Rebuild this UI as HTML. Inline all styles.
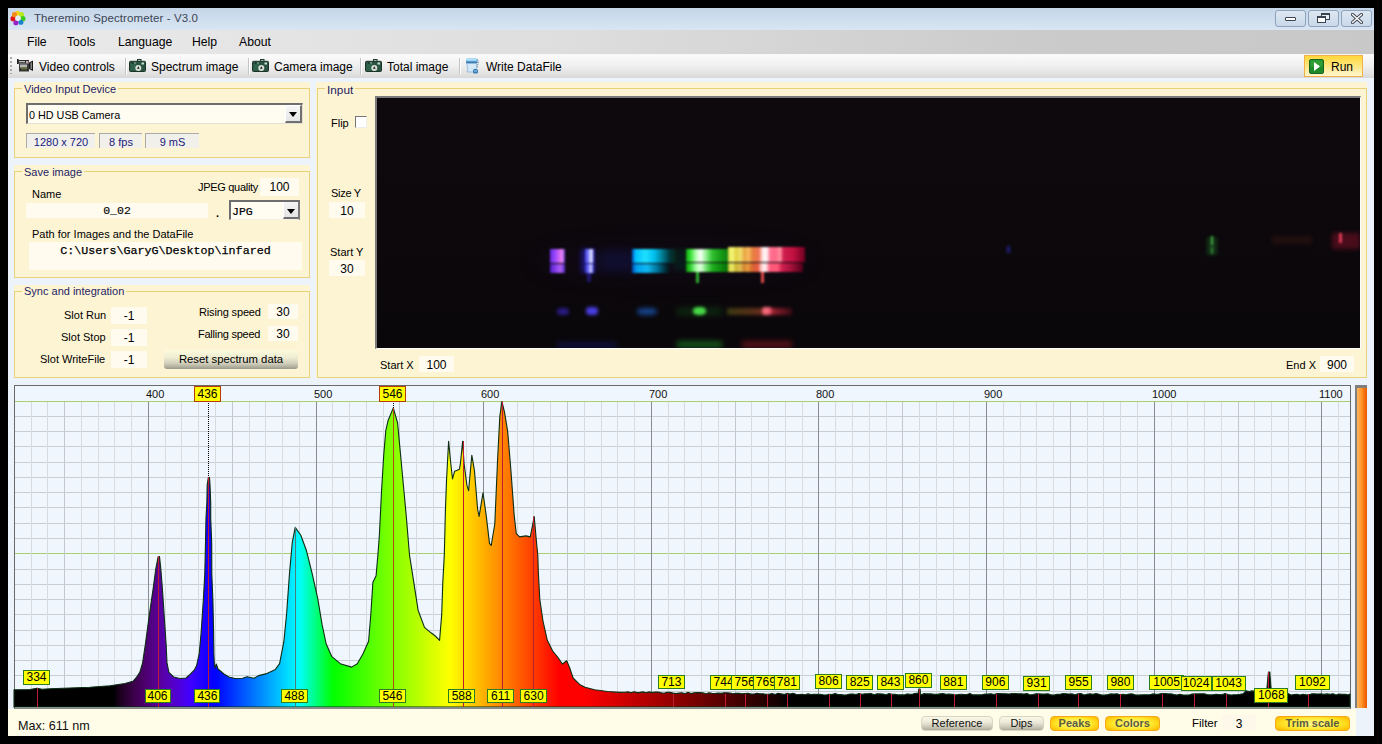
<!DOCTYPE html>
<html><head><meta charset="utf-8">
<style>
*{margin:0;padding:0;box-sizing:border-box}
html,body{width:1382px;height:744px;overflow:hidden;background:#000;font-family:"Liberation Sans",sans-serif;position:relative}
.a{position:absolute}
#win{position:absolute;left:8px;top:8px;width:1366px;height:728px;background:#edf3fa}
#title{position:absolute;left:8px;top:8px;width:1366px;height:22px;background:linear-gradient(#c5d6e9,#d9e5f2)}
.tt{position:absolute;left:34px;top:12px;font-size:11.5px;color:#3a4554;letter-spacing:0.1px;white-space:nowrap}
.wb{position:absolute;top:10px;width:31px;height:17px;border:1px solid #8ea3bd;border-radius:3px;background:linear-gradient(#dde7f2,#c9d8e9)}
#menu{position:absolute;left:8px;top:30px;width:1366px;height:24px;background:linear-gradient(90deg,#eaeaea 0%,#dedede 40%,#cbcbcb 75%,#c8c8c8 100%)}
.mi{position:absolute;top:35px;font-size:12.2px;color:#000;white-space:nowrap}
#tool{position:absolute;left:8px;top:54px;width:1366px;height:24px;background:linear-gradient(#fbfbfb 0%,#f0f0f0 45%,#e2e2e2 80%,#d8d8d8 100%);border-top:1px solid #f7f7f7}
.tx{position:absolute;top:59.5px;font-size:12px;color:#000;white-space:nowrap}
.sep{position:absolute;top:58px;width:1px;height:17px;background:#c4c4c4;box-shadow:1px 0 0 #fff}
.grp{position:absolute;background:#fdf4d4}
.bd{position:absolute;border:1px solid #ead27a}
.gt{position:absolute;font-size:11px;color:#1d1d64;background:#fdf4d4;padding:0 2px;white-space:nowrap}
.lbl{position:absolute;font-size:11px;color:#000;white-space:nowrap}
.inp{position:absolute;background:#fffbef;font-size:12px;color:#000;text-align:center;white-space:nowrap}
.info{position:absolute;background:#f1f0ea;border-top:1px solid #aaa;border-left:1px solid #aaa;font-size:11px;color:#1a1a7a;text-align:center;white-space:nowrap;line-height:14px}
.ax{position:absolute;top:388px;font-size:11px;color:#111;white-space:nowrap}
.pk{position:absolute;height:14.5px;background:#ffff00;border:1px solid #2b7d22;font-size:12px;line-height:13px;color:#000;text-align:center;white-space:nowrap}
.hpk{position:absolute;height:16px;background:#ffff00;border:1.5px solid #b53a0c;font-size:12px;line-height:14px;color:#000;text-align:center}
.btn{position:absolute;height:15px;border-radius:5px;font-size:11px;text-align:center;line-height:13px;white-space:nowrap}
.gb{background:linear-gradient(#faf9e6 0%,#eceada 40%,#cdcab9 75%,#aeab9c 100%);border:1px solid #d8d5c2;color:#111;border-radius:4px}
.yb{background:radial-gradient(ellipse 60% 70% at 50% 50%,#fff690 0%,#ffea30 60%,#ffc000 100%);border:1px solid #f2a818;color:#5c5c40;font-weight:bold;border-radius:4px}
</style></head><body>
<div id="win"></div>
<div id="title"></div>
<svg class="a" style="left:8px;top:8px" width="20" height="20" viewBox="0 0 20 20"><circle cx="9.56" cy="5.22" r="2.55" fill="#f5d31e"/><circle cx="13.54" cy="6.66" r="2.55" fill="#b8e81e"/><circle cx="14.98" cy="10.64" r="2.55" fill="#3ccc1e"/><circle cx="12.87" cy="14.30" r="2.55" fill="#1a86c8"/><circle cx="7.89" cy="14.73" r="2.55" fill="#9a22c8"/><circle cx="5.02" cy="10.64" r="2.55" fill="#e0141c"/><circle cx="6.46" cy="6.66" r="2.55" fill="#f28a1a"/><circle cx="10" cy="10.2" r="2.7" fill="#e4ecf4"/></svg>
<div class="tt">Theremino Spectrometer - V3.0</div>
<div class="wb" style="left:1275px"><div class="a" style="left:9px;top:6px;width:11px;height:4px;border:1px solid #3c4350;background:#fff;border-radius:1px"></div></div>
<div class="wb" style="left:1308px">
  <div class="a" style="left:12px;top:2px;width:9px;height:7px;border:1px solid #3c4350;border-top-width:2px;background:#e8eef5"></div>
  <div class="a" style="left:8px;top:5px;width:9px;height:7px;border:1px solid #3c4350;border-top-width:2px;background:#fff"></div>
</div>
<div class="wb" style="left:1341px">
  <svg class="a" style="left:9px;top:2px" width="12" height="11" viewBox="0 0 12 11"><path d="M1.5,1.5 L10.5,9.5 M10.5,1.5 L1.5,9.5" stroke="#3c4350" stroke-width="3.2" stroke-linecap="round"/><path d="M1.5,1.5 L10.5,9.5 M10.5,1.5 L1.5,9.5" stroke="#fff" stroke-width="1.4" stroke-linecap="round"/></svg>
</div>
<div id="menu"></div>
<div class="mi" style="left:27px">File</div>
<div class="mi" style="left:67px">Tools</div>
<div class="mi" style="left:118px">Language</div>
<div class="mi" style="left:192px">Help</div>
<div class="mi" style="left:239px">About</div>
<div id="tool"></div>
<div class="a" style="left:10px;top:57px;width:2px;height:17px;background:repeating-linear-gradient(#a8a8a8 0 2px,transparent 2px 4px)"></div>
<svg class="a" style="left:17px;top:59px" width="17" height="13" viewBox="0 0 17 13">
  <rect x="0" y="0" width="1.6" height="5" fill="#222"/>
  <rect x="1" y="1" width="11" height="3.5" fill="#2a2a2a"/><rect x="2" y="2" width="6" height="1.3" fill="#bbb"/>
  <rect x="9" y="2" width="2.5" height="2.5" fill="#c8a8b0"/>
  <rect x="2" y="4.5" width="10" height="8" fill="#3a3a3a"/><rect x="3" y="5.5" width="7" height="3" fill="#b8b8b8"/>
  <rect x="4" y="8.5" width="6" height="3.5" fill="#6a6a40"/><rect x="3" y="10.5" width="8" height="1.2" fill="#222"/>
  <path d="M12,3.5 L16,1.5 L16,12 L12,10 Z" fill="#1a1a1a"/><rect x="13.5" y="3.5" width="1.5" height="6.5" fill="#888"/>
</svg>
<div class="tx" style="left:39px">Video controls</div>
<div class="sep" style="left:125px"></div>
<svg class="a" style="left:129px;top:59px" width="17" height="13" viewBox="0 0 17 13">
  <rect x="8" y="0" width="4.5" height="3" fill="#1e3a2c"/><rect x="9" y="1" width="2.5" height="1" fill="#cfd8cf"/>
  <rect x="0.5" y="2.3" width="16" height="10.2" rx="1" fill="#2b5342" stroke="#1c3428" stroke-width="1"/>
  <rect x="1.5" y="5" width="6" height="6.5" fill="#2f6650" opacity="0.8"/>
  <rect x="3" y="3.5" width="1.5" height="1" fill="#0f2018"/><rect x="5" y="3.5" width="2" height="1" fill="#9ab8a8"/>
  <rect x="12.5" y="3.5" width="2.5" height="2" fill="#c8e0d0"/>
  <circle cx="9.3" cy="9" r="3" fill="#d8e0d8"/><path d="M9.3,7.3 L10.6,9.8 L8,9.8 Z" fill="#0a140e"/>
</svg>

<div class="tx" style="left:151px">Spectrum image</div>
<div class="sep" style="left:248px"></div>
<svg class="a" style="left:252px;top:59px" width="17" height="13" viewBox="0 0 17 13">
  <rect x="8" y="0" width="4.5" height="3" fill="#1e3a2c"/><rect x="9" y="1" width="2.5" height="1" fill="#cfd8cf"/>
  <rect x="0.5" y="2.3" width="16" height="10.2" rx="1" fill="#2b5342" stroke="#1c3428" stroke-width="1"/>
  <rect x="1.5" y="5" width="6" height="6.5" fill="#2f6650" opacity="0.8"/>
  <rect x="3" y="3.5" width="1.5" height="1" fill="#0f2018"/><rect x="5" y="3.5" width="2" height="1" fill="#9ab8a8"/>
  <rect x="12.5" y="3.5" width="2.5" height="2" fill="#c8e0d0"/>
  <circle cx="9.3" cy="9" r="3" fill="#d8e0d8"/><path d="M9.3,7.3 L10.6,9.8 L8,9.8 Z" fill="#0a140e"/>
</svg>

<div class="tx" style="left:274px">Camera image</div>
<div class="sep" style="left:360px"></div>
<svg class="a" style="left:365px;top:59px" width="17" height="13" viewBox="0 0 17 13">
  <rect x="8" y="0" width="4.5" height="3" fill="#1e3a2c"/><rect x="9" y="1" width="2.5" height="1" fill="#cfd8cf"/>
  <rect x="0.5" y="2.3" width="16" height="10.2" rx="1" fill="#2b5342" stroke="#1c3428" stroke-width="1"/>
  <rect x="1.5" y="5" width="6" height="6.5" fill="#2f6650" opacity="0.8"/>
  <rect x="3" y="3.5" width="1.5" height="1" fill="#0f2018"/><rect x="5" y="3.5" width="2" height="1" fill="#9ab8a8"/>
  <rect x="12.5" y="3.5" width="2.5" height="2" fill="#c8e0d0"/>
  <circle cx="9.3" cy="9" r="3" fill="#d8e0d8"/><path d="M9.3,7.3 L10.6,9.8 L8,9.8 Z" fill="#0a140e"/>
</svg>

<div class="tx" style="left:387px">Total image</div>
<div class="sep" style="left:459px"></div>
<svg class="a" style="left:465px;top:57px" width="15" height="17" viewBox="0 0 15 17">
  <path d="M2,6 L11,6 Q12.5,9 11,12 L11,15 L2,15 Q3.5,12 2,9 Z" fill="#d4e8f8" stroke="#8ab4d8" stroke-width="0.8"/>
  <rect x="1" y="1.2" width="11.5" height="5" rx="2.2" fill="#7ec0ec"/>
  <rect x="1.5" y="1.6" width="10" height="2" rx="1" fill="#b8e4fa"/>
  <rect x="1" y="4.5" width="11.5" height="1.7" fill="#3a7ab0"/>
  <path d="M12,2 Q14,4 13,7 Q12,9 13,11" stroke="#4a6a88" stroke-width="0.9" fill="none" stroke-dasharray="1,0.8"/>
  <rect x="8" y="12" width="5" height="4.5" rx="1.5" fill="#3a78b0"/>
  <rect x="9" y="13" width="3" height="2" fill="#6aa8d8"/>
</svg>
<div class="tx" style="left:486px">Write DataFile</div>
<div class="a" style="left:1304px;top:55px;width:59px;height:22px;border:1px solid #f0b14a;background:linear-gradient(#ffd83a 0%,#ffe680 50%,#fff6d0 100%)"></div>
<svg class="a" style="left:1309px;top:59px" width="15" height="15" viewBox="0 0 15 15">
  <rect x="0.5" y="0.5" width="14" height="14" rx="1.5" fill="#1f8a2a" stroke="#176620"/>
  <rect x="1.5" y="1.5" width="12" height="6" fill="#3aad40" opacity="0.6"/>
  <path d="M5,3 L11,7.5 L5,12 Z" fill="#fff"/>
</svg>
<div class="tx" style="left:1331px">Run</div>

<!-- Group 1 -->
<div class="grp" style="left:14px;top:82px;width:296px;height:76px"></div>
<div class="bd" style="left:14px;top:88px;width:296px;height:70px"></div>
<div class="gt" style="left:22px;top:82.5px">Video Input Device</div>
<div class="a" style="left:26px;top:103px;width:277px;height:21px;background:#fffcf2;border-top:2px solid #6e6e6e;border-left:2px solid #6e6e6e;border-bottom:1px solid #e4e0d4;border-right:1px solid #e4e0d4"></div>
<div class="a" style="left:285px;top:105px;width:17px;height:18px;background:linear-gradient(#f6f6f6,#e6e6e6);border-right:2px solid #707070;border-bottom:2px solid #707070;border-left:1px solid #fff;border-top:1px solid #fff"></div>
<div class="a" style="left:289px;top:112px;width:0;height:0;border-left:4.5px solid transparent;border-right:4.5px solid transparent;border-top:5px solid #000"></div>
<div class="lbl" style="left:29px;top:109px;font-size:10.8px">0 HD USB Camera</div>
<div class="info" style="left:26px;top:133px;width:69px;height:15px;line-height:16px">1280 x 720</div>
<div class="info" style="left:99px;top:133px;width:43px;height:15px;line-height:16px">8 fps</div>
<div class="info" style="left:145px;top:133px;width:54px;height:15px;line-height:16px">9 mS</div>

<!-- Group 2 -->
<div class="grp" style="left:14px;top:165px;width:296px;height:113px"></div>
<div class="bd" style="left:14px;top:171px;width:296px;height:107px"></div>
<div class="gt" style="left:22px;top:165.5px">Save image</div>
<div class="lbl" style="left:198px;top:181px;letter-spacing:-0.3px">JPEG quality</div>
<div class="inp" style="left:260px;top:178px;width:39px;height:18px;line-height:19px">100</div>
<div class="lbl" style="left:32px;top:188px">Name</div>
<div class="inp" style="left:26px;top:203px;width:182px;height:15px;line-height:15px;font-family:'Liberation Mono',monospace;font-size:11.5px;color:#000;-webkit-text-stroke:0.15px #000">0_02</div>
<div class="lbl" style="left:216px;top:207px;font-weight:bold">.</div>
<div class="a" style="left:229px;top:200px;width:71px;height:20px;background:#fffcf2;border-top:2px solid #6e6e6e;border-left:2px solid #6e6e6e;border-right:2px solid #7a7a7a;border-bottom:1px solid #f4f0e4"></div>
<div class="lbl" style="left:232px;top:205px;font-family:'Liberation Mono',monospace;font-size:11.5px;color:#000;-webkit-text-stroke:0.2px #000">JPG</div>
<div class="a" style="left:283px;top:202px;width:15px;height:17px;background:linear-gradient(#f4f4f4,#e4e4e4);border-bottom:2px solid #707070;border-left:1px solid #fff"></div>
<div class="a" style="left:287px;top:209px;width:0;height:0;border-left:4.5px solid transparent;border-right:4.5px solid transparent;border-top:5px solid #000"></div>
<div class="lbl" style="left:32px;top:228px">Path for Images and the DataFile</div>
<div class="inp" style="left:29px;top:242px;width:273px;height:28px;font-family:'Liberation Mono',monospace;font-size:11.7px;line-height:15px;padding-top:1.5px;color:#000;-webkit-text-stroke:0.25px #000">C:\Users\GaryG\Desktop\infared</div>

<!-- Group 3 -->
<div class="grp" style="left:14px;top:285px;width:296px;height:93px"></div>
<div class="bd" style="left:14px;top:291px;width:296px;height:87px"></div>
<div class="gt" style="left:22px;top:285px">Sync and integration</div>
<div class="lbl" style="left:64px;top:309px">Slot Run</div>
<div class="inp" style="left:111px;top:307px;width:36px;height:17px;line-height:18px">-1</div>
<div class="lbl" style="left:61px;top:331px">Slot Stop</div>
<div class="inp" style="left:111px;top:329px;width:36px;height:17px;line-height:18px">-1</div>
<div class="lbl" style="left:40px;top:353px">Slot WriteFile</div>
<div class="inp" style="left:111px;top:351px;width:36px;height:17px;line-height:18px">-1</div>
<div class="lbl" style="left:199px;top:306px;letter-spacing:-0.15px">Rising speed</div>
<div class="inp" style="left:268px;top:304px;width:30px;height:15px;line-height:16px">30</div>
<div class="lbl" style="left:198px;top:328px;letter-spacing:-0.25px">Falling speed</div>
<div class="inp" style="left:268px;top:326px;width:30px;height:15px;line-height:16px">30</div>
<div class="a" style="left:164px;top:350px;width:134px;height:19px;border-radius:3px;background:linear-gradient(#fcfbdc 0%,#eeedd2 40%,#cfcdb9 72%,#9c9a8b 100%);font-size:11.3px;text-align:center;line-height:18px;color:#000">Reset spectrum data</div>

<!-- Group 4 Input -->
<div class="grp" style="left:316px;top:82px;width:1051px;height:296px"></div>
<div class="bd" style="left:317px;top:88px;width:1050px;height:290px"></div>
<div class="gt" style="left:325px;top:83px;font-size:11.8px">Input</div>
<div class="lbl" style="left:331px;top:117px">Flip</div>
<div class="a" style="left:355px;top:116px;width:12px;height:12px;background:#fff;border-top:1px solid #777;border-left:1px solid #777;border-right:1px solid #eee;border-bottom:1px solid #eee"></div>
<div class="lbl" style="left:331px;top:186.5px;letter-spacing:-0.3px">Size Y</div>
<div class="inp" style="left:329px;top:202px;width:36px;height:16px;line-height:18px">10</div>
<div class="lbl" style="left:330px;top:245.5px">Start Y</div>
<div class="inp" style="left:329px;top:260px;width:36px;height:16px;line-height:18px">30</div>
<div class="lbl" style="left:380px;top:359px">Start X</div>
<div class="inp" style="left:419px;top:356px;width:35px;height:16px;line-height:18px">100</div>
<div class="lbl" style="left:1286px;top:359px">End X</div>
<div class="inp" style="left:1320px;top:356px;width:34px;height:16px;line-height:18px">900</div>

<div class="a" style="left:375px;top:96px;width:986px;height:253px;border-top:2px solid #7a7a7a;border-left:2px solid #7a7a7a;border-right:1px solid #fff;border-bottom:1px solid #fff"></div>
<div class="a" style="left:377px;top:98px;width:983px;height:250px;background:linear-gradient(#0d090c,#0c080c 50%,#0a070a);overflow:hidden">
  <div class="a" style="left:0;top:0;width:983px;height:250px;filter:blur(0.9px)">
    <!-- haze -->
    <div class="a" style="left:160px;top:146px;width:270px;height:34px;border-radius:50%;background:rgba(30,15,50,0.22);filter:blur(10px)"></div>
    <!-- violet -->
    <div class="a" style="left:173px;top:151px;width:15px;height:14px;background:linear-gradient(90deg,#6a2ae0,#9a48ff 35%,#e070f0 70%,#f090f0 80%,#6030d0 100%)"></div>
    <div class="a" style="left:173px;top:166px;width:15px;height:9px;background:linear-gradient(90deg,#5020c0,#8a40f0 40%,#b060f0 70%,#5028c0 100%)"></div>
    <!-- blue line -->
    <div class="a" style="left:204px;top:151px;width:14px;height:24px;background:rgba(40,30,200,0.55);filter:blur(2px)"></div>
    <div class="a" style="left:208px;top:151px;width:9px;height:14px;background:linear-gradient(90deg,#4040e0,#8080ff 40%,#f0f0ff 65%,#d0d0ff 80%,#2020d0 100%)"></div>
    <div class="a" style="left:208px;top:166px;width:9px;height:9px;background:linear-gradient(90deg,#3030c0,#7070ff 40%,#e0e0ff 65%,#2020d0 100%)"></div>
    <div class="a" style="left:210px;top:175px;width:4px;height:9px;background:rgba(50,40,200,0.5)"></div>
    <!-- faint blue -->
    <div class="a" style="left:222px;top:152px;width:36px;height:22px;background:rgba(20,25,110,0.3);filter:blur(4px)"></div>
    <!-- cyan -->
    <div class="a" style="left:255px;top:151px;width:44px;height:14px;background:linear-gradient(90deg,#0050c0,#00c0ff 8%,#20e0ff 30%,#00c0f0 50%,#008098 68%,#003a40 85%,#0d1a14 100%)"></div>
    <div class="a" style="left:255px;top:166px;width:38px;height:9px;background:linear-gradient(90deg,#0048b0,#00a0f0 12%,#10b8f0 40%,#0078a0 65%,#002830 90%,#0d1218 100%)"></div>
    <div class="a" style="left:296px;top:151px;width:14px;height:22px;background:rgba(0,60,40,0.35);filter:blur(2px)"></div>
    <!-- green -->
    <div class="a" style="left:309px;top:151px;width:42px;height:13px;background:linear-gradient(90deg,#10a010,#30e030 10%,#c0ffc0 25%,#f8fff8 35%,#90f090 48%,#30c030 62%,#18a018 80%,#108010 100%)"></div>
    <div class="a" style="left:309px;top:165px;width:42px;height:9px;background:linear-gradient(90deg,#0c900c,#28d028 10%,#b0ffb0 25%,#e0ffe0 35%,#70e070 48%,#20b020 62%,#109010 80%,#087008 100%)"></div>
    <div class="a" style="left:319px;top:174px;width:3px;height:11px;background:#30b030"></div>
    <!-- yellow/red -->
    <div class="a" style="left:351px;top:149px;width:77px;height:15px;background:linear-gradient(90deg,#d8d840,#f8f880 5%,#e0d040 11%,#f0e070 16%,#e8a040 22%,#f8c060 26%,#e88040 32%,#f07050 40%,#ffe8e8 45%,#fff8f8 50%,#ff7090 55%,#ff6888 62%,#ff90a0 68%,#d02050 72%,#c01040 85%,#700020 100%)"></div>
    <div class="a" style="left:351px;top:165px;width:75px;height:9px;background:linear-gradient(90deg,#c0c030,#f0f070 5%,#c8b030 11%,#e0c050 16%,#d08030 22%,#e8a040 26%,#d86830 32%,#e85840 40%,#ffd8d8 45%,#fff0f0 50%,#ff5878 56%,#ff5878 66%,#d02050 72%,#a01038 85%,#500018 100%)"></div>
    <div class="a" style="left:384px;top:174px;width:3px;height:11px;background:#e04848"></div>
    <!-- lower faint band -->
    <div class="a" style="left:180px;top:210px;width:12px;height:7px;border-radius:40%;background:rgba(60,40,210,0.6);filter:blur(1.8px)"></div>
    <div class="a" style="left:209px;top:209px;width:12px;height:8px;border-radius:40%;background:rgba(80,70,255,0.9);filter:blur(1.5px)"></div>
    <div class="a" style="left:260px;top:210px;width:20px;height:7px;border-radius:40%;background:rgba(30,110,230,0.6);filter:blur(2px)"></div>
    <div class="a" style="left:300px;top:210px;width:45px;height:7px;background:rgba(20,110,30,0.35);filter:blur(3px)"></div>
    <div class="a" style="left:316px;top:209px;width:13px;height:8px;border-radius:40%;background:rgba(80,240,80,0.9);filter:blur(1.2px)"></div>
    <div class="a" style="left:350px;top:210px;width:40px;height:7px;background:linear-gradient(90deg,rgba(120,120,30,.45),rgba(180,100,40,.45) 60%,rgba(220,70,50,.5));filter:blur(1.5px)"></div>
    <div class="a" style="left:385px;top:209px;width:10px;height:8px;border-radius:40%;background:rgba(255,110,130,0.95);filter:blur(1.2px)"></div>
    <div class="a" style="left:393px;top:210px;width:22px;height:7px;background:linear-gradient(90deg,rgba(230,50,70,.7),rgba(160,20,40,.3));filter:blur(1.5px)"></div>
    <div class="a" style="left:180px;top:244px;width:60px;height:6px;background:rgba(30,30,150,.35);filter:blur(2.5px)"></div>
    <div class="a" style="left:300px;top:243px;width:45px;height:7px;background:rgba(30,160,40,.5);filter:blur(2.5px)"></div>
    <div class="a" style="left:365px;top:243px;width:50px;height:7px;background:rgba(180,30,40,.45);filter:blur(2.5px)"></div>
    <!-- right faint blobs -->
    <div class="a" style="left:630px;top:148px;width:3px;height:7px;background:rgba(60,60,255,.5);filter:blur(0.8px)"></div>
    <div class="a" style="left:830px;top:139px;width:10px;height:18px;background:rgba(30,120,40,.4);filter:blur(1.5px)"></div>
    <div class="a" style="left:834px;top:138px;width:2px;height:9px;background:rgba(90,220,90,.7)"></div>
    <div class="a" style="left:834px;top:149px;width:2px;height:7px;background:rgba(90,200,90,.5)"></div>
    <div class="a" style="left:895px;top:138px;width:40px;height:8px;background:rgba(100,40,25,.25);filter:blur(2px)"></div>
    <div class="a" style="left:955px;top:135px;width:28px;height:16px;background:rgba(170,20,50,.4);filter:blur(2px)"></div>
    <div class="a" style="left:962px;top:135px;width:3px;height:10px;background:rgba(255,70,100,.8)"></div>
  </div>
</div>

<div class="a" style="left:14px;top:385px;width:1337px;height:324px;background:#eff6fe;border:1px solid #6a6a6a;border-bottom-color:#8a8a8a"></div>
<svg class="a" style="left:0;top:0" width="1382" height="744" viewBox="0 0 1382 744">
<defs><linearGradient id="sg" x1="14" x2="1350" y1="0" y2="0" gradientUnits="userSpaceOnUse">
<stop offset="0.0000" stop-color="rgb(0,0,0)"/>
<stop offset="0.0030" stop-color="rgb(0,0,0)"/>
<stop offset="0.0060" stop-color="rgb(0,0,0)"/>
<stop offset="0.0090" stop-color="rgb(0,0,0)"/>
<stop offset="0.0120" stop-color="rgb(0,0,0)"/>
<stop offset="0.0150" stop-color="rgb(0,0,0)"/>
<stop offset="0.0180" stop-color="rgb(0,0,0)"/>
<stop offset="0.0210" stop-color="rgb(0,0,0)"/>
<stop offset="0.0240" stop-color="rgb(0,0,0)"/>
<stop offset="0.0269" stop-color="rgb(0,0,0)"/>
<stop offset="0.0299" stop-color="rgb(0,0,0)"/>
<stop offset="0.0329" stop-color="rgb(0,0,0)"/>
<stop offset="0.0359" stop-color="rgb(0,0,0)"/>
<stop offset="0.0389" stop-color="rgb(0,0,0)"/>
<stop offset="0.0419" stop-color="rgb(0,0,0)"/>
<stop offset="0.0449" stop-color="rgb(0,0,0)"/>
<stop offset="0.0479" stop-color="rgb(0,0,0)"/>
<stop offset="0.0509" stop-color="rgb(0,0,0)"/>
<stop offset="0.0539" stop-color="rgb(0,0,0)"/>
<stop offset="0.0569" stop-color="rgb(0,0,0)"/>
<stop offset="0.0599" stop-color="rgb(0,0,0)"/>
<stop offset="0.0629" stop-color="rgb(0,0,0)"/>
<stop offset="0.0659" stop-color="rgb(0,0,0)"/>
<stop offset="0.0689" stop-color="rgb(0,0,0)"/>
<stop offset="0.0719" stop-color="rgb(0,0,0)"/>
<stop offset="0.0749" stop-color="rgb(0,0,0)"/>
<stop offset="0.0778" stop-color="rgb(21,0,22)"/>
<stop offset="0.0808" stop-color="rgb(32,0,35)"/>
<stop offset="0.0838" stop-color="rgb(42,0,48)"/>
<stop offset="0.0868" stop-color="rgb(51,0,61)"/>
<stop offset="0.0898" stop-color="rgb(60,0,74)"/>
<stop offset="0.0928" stop-color="rgb(66,0,87)"/>
<stop offset="0.0958" stop-color="rgb(72,0,100)"/>
<stop offset="0.0988" stop-color="rgb(77,0,113)"/>
<stop offset="0.1018" stop-color="rgb(81,0,126)"/>
<stop offset="0.1048" stop-color="rgb(84,0,138)"/>
<stop offset="0.1078" stop-color="rgb(86,0,151)"/>
<stop offset="0.1108" stop-color="rgb(87,0,164)"/>
<stop offset="0.1138" stop-color="rgb(87,0,177)"/>
<stop offset="0.1168" stop-color="rgb(85,0,190)"/>
<stop offset="0.1198" stop-color="rgb(83,0,203)"/>
<stop offset="0.1228" stop-color="rgb(80,0,216)"/>
<stop offset="0.1257" stop-color="rgb(76,0,229)"/>
<stop offset="0.1287" stop-color="rgb(70,0,242)"/>
<stop offset="0.1317" stop-color="rgb(64,0,255)"/>
<stop offset="0.1347" stop-color="rgb(54,0,255)"/>
<stop offset="0.1377" stop-color="rgb(44,0,255)"/>
<stop offset="0.1407" stop-color="rgb(33,0,255)"/>
<stop offset="0.1437" stop-color="rgb(23,0,255)"/>
<stop offset="0.1467" stop-color="rgb(13,0,255)"/>
<stop offset="0.1497" stop-color="rgb(3,0,255)"/>
<stop offset="0.1527" stop-color="rgb(0,9,255)"/>
<stop offset="0.1557" stop-color="rgb(0,21,255)"/>
<stop offset="0.1587" stop-color="rgb(0,33,255)"/>
<stop offset="0.1617" stop-color="rgb(0,45,255)"/>
<stop offset="0.1647" stop-color="rgb(0,57,255)"/>
<stop offset="0.1677" stop-color="rgb(0,69,255)"/>
<stop offset="0.1707" stop-color="rgb(0,82,255)"/>
<stop offset="0.1737" stop-color="rgb(0,94,255)"/>
<stop offset="0.1766" stop-color="rgb(0,106,255)"/>
<stop offset="0.1796" stop-color="rgb(0,118,255)"/>
<stop offset="0.1826" stop-color="rgb(0,130,255)"/>
<stop offset="0.1856" stop-color="rgb(0,142,255)"/>
<stop offset="0.1886" stop-color="rgb(0,154,255)"/>
<stop offset="0.1916" stop-color="rgb(0,167,255)"/>
<stop offset="0.1946" stop-color="rgb(0,179,255)"/>
<stop offset="0.1976" stop-color="rgb(0,191,255)"/>
<stop offset="0.2006" stop-color="rgb(0,203,255)"/>
<stop offset="0.2036" stop-color="rgb(0,215,255)"/>
<stop offset="0.2066" stop-color="rgb(0,227,255)"/>
<stop offset="0.2096" stop-color="rgb(0,240,255)"/>
<stop offset="0.2126" stop-color="rgb(0,252,255)"/>
<stop offset="0.2156" stop-color="rgb(0,255,233)"/>
<stop offset="0.2186" stop-color="rgb(0,255,202)"/>
<stop offset="0.2216" stop-color="rgb(0,255,172)"/>
<stop offset="0.2246" stop-color="rgb(0,255,141)"/>
<stop offset="0.2275" stop-color="rgb(0,255,111)"/>
<stop offset="0.2305" stop-color="rgb(0,255,81)"/>
<stop offset="0.2335" stop-color="rgb(0,255,50)"/>
<stop offset="0.2365" stop-color="rgb(0,255,20)"/>
<stop offset="0.2395" stop-color="rgb(3,255,0)"/>
<stop offset="0.2425" stop-color="rgb(12,255,0)"/>
<stop offset="0.2455" stop-color="rgb(20,255,0)"/>
<stop offset="0.2485" stop-color="rgb(29,255,0)"/>
<stop offset="0.2515" stop-color="rgb(38,255,0)"/>
<stop offset="0.2545" stop-color="rgb(46,255,0)"/>
<stop offset="0.2575" stop-color="rgb(55,255,0)"/>
<stop offset="0.2605" stop-color="rgb(64,255,0)"/>
<stop offset="0.2635" stop-color="rgb(73,255,0)"/>
<stop offset="0.2665" stop-color="rgb(81,255,0)"/>
<stop offset="0.2695" stop-color="rgb(90,255,0)"/>
<stop offset="0.2725" stop-color="rgb(99,255,0)"/>
<stop offset="0.2754" stop-color="rgb(107,255,0)"/>
<stop offset="0.2784" stop-color="rgb(116,255,0)"/>
<stop offset="0.2814" stop-color="rgb(125,255,0)"/>
<stop offset="0.2844" stop-color="rgb(133,255,0)"/>
<stop offset="0.2874" stop-color="rgb(142,255,0)"/>
<stop offset="0.2904" stop-color="rgb(151,255,0)"/>
<stop offset="0.2934" stop-color="rgb(159,255,0)"/>
<stop offset="0.2964" stop-color="rgb(168,255,0)"/>
<stop offset="0.2994" stop-color="rgb(177,255,0)"/>
<stop offset="0.3024" stop-color="rgb(185,255,0)"/>
<stop offset="0.3054" stop-color="rgb(194,255,0)"/>
<stop offset="0.3084" stop-color="rgb(203,255,0)"/>
<stop offset="0.3114" stop-color="rgb(212,255,0)"/>
<stop offset="0.3144" stop-color="rgb(220,255,0)"/>
<stop offset="0.3174" stop-color="rgb(229,255,0)"/>
<stop offset="0.3204" stop-color="rgb(238,255,0)"/>
<stop offset="0.3234" stop-color="rgb(246,255,0)"/>
<stop offset="0.3263" stop-color="rgb(255,255,0)"/>
<stop offset="0.3293" stop-color="rgb(255,246,0)"/>
<stop offset="0.3323" stop-color="rgb(255,236,0)"/>
<stop offset="0.3353" stop-color="rgb(255,227,0)"/>
<stop offset="0.3383" stop-color="rgb(255,218,0)"/>
<stop offset="0.3413" stop-color="rgb(255,208,0)"/>
<stop offset="0.3443" stop-color="rgb(255,199,0)"/>
<stop offset="0.3473" stop-color="rgb(255,190,0)"/>
<stop offset="0.3503" stop-color="rgb(255,180,0)"/>
<stop offset="0.3533" stop-color="rgb(255,171,0)"/>
<stop offset="0.3563" stop-color="rgb(255,161,0)"/>
<stop offset="0.3593" stop-color="rgb(255,152,0)"/>
<stop offset="0.3623" stop-color="rgb(255,143,0)"/>
<stop offset="0.3653" stop-color="rgb(255,133,0)"/>
<stop offset="0.3683" stop-color="rgb(255,124,0)"/>
<stop offset="0.3713" stop-color="rgb(255,115,0)"/>
<stop offset="0.3743" stop-color="rgb(255,105,0)"/>
<stop offset="0.3772" stop-color="rgb(255,96,0)"/>
<stop offset="0.3802" stop-color="rgb(255,87,0)"/>
<stop offset="0.3832" stop-color="rgb(255,77,0)"/>
<stop offset="0.3862" stop-color="rgb(255,68,0)"/>
<stop offset="0.3892" stop-color="rgb(255,59,0)"/>
<stop offset="0.3922" stop-color="rgb(255,49,0)"/>
<stop offset="0.3952" stop-color="rgb(255,40,0)"/>
<stop offset="0.3982" stop-color="rgb(255,30,0)"/>
<stop offset="0.4012" stop-color="rgb(255,21,0)"/>
<stop offset="0.4042" stop-color="rgb(255,12,0)"/>
<stop offset="0.4072" stop-color="rgb(255,2,0)"/>
<stop offset="0.4102" stop-color="rgb(255,0,0)"/>
<stop offset="0.4132" stop-color="rgb(255,0,0)"/>
<stop offset="0.4162" stop-color="rgb(255,0,0)"/>
<stop offset="0.4192" stop-color="rgb(255,0,0)"/>
<stop offset="0.4222" stop-color="rgb(255,0,0)"/>
<stop offset="0.4251" stop-color="rgb(255,0,0)"/>
<stop offset="0.4281" stop-color="rgb(253,0,0)"/>
<stop offset="0.4311" stop-color="rgb(248,0,0)"/>
<stop offset="0.4341" stop-color="rgb(243,0,0)"/>
<stop offset="0.4371" stop-color="rgb(238,0,0)"/>
<stop offset="0.4401" stop-color="rgb(233,0,0)"/>
<stop offset="0.4431" stop-color="rgb(228,0,0)"/>
<stop offset="0.4461" stop-color="rgb(224,0,0)"/>
<stop offset="0.4491" stop-color="rgb(219,0,0)"/>
<stop offset="0.4521" stop-color="rgb(214,0,0)"/>
<stop offset="0.4551" stop-color="rgb(209,0,0)"/>
<stop offset="0.4581" stop-color="rgb(204,0,0)"/>
<stop offset="0.4611" stop-color="rgb(199,0,0)"/>
<stop offset="0.4641" stop-color="rgb(194,0,0)"/>
<stop offset="0.4671" stop-color="rgb(190,0,0)"/>
<stop offset="0.4701" stop-color="rgb(185,0,0)"/>
<stop offset="0.4731" stop-color="rgb(180,0,0)"/>
<stop offset="0.4760" stop-color="rgb(175,0,0)"/>
<stop offset="0.4790" stop-color="rgb(170,0,0)"/>
<stop offset="0.4820" stop-color="rgb(165,0,0)"/>
<stop offset="0.4850" stop-color="rgb(160,0,0)"/>
<stop offset="0.4880" stop-color="rgb(156,0,0)"/>
<stop offset="0.4910" stop-color="rgb(151,0,0)"/>
<stop offset="0.4940" stop-color="rgb(146,0,0)"/>
<stop offset="0.4970" stop-color="rgb(141,0,0)"/>
<stop offset="0.5000" stop-color="rgb(136,0,0)"/>
<stop offset="0.5030" stop-color="rgb(131,0,0)"/>
<stop offset="0.5060" stop-color="rgb(126,0,0)"/>
<stop offset="0.5090" stop-color="rgb(121,0,0)"/>
<stop offset="0.5120" stop-color="rgb(117,0,0)"/>
<stop offset="0.5150" stop-color="rgb(112,0,0)"/>
<stop offset="0.5180" stop-color="rgb(107,0,0)"/>
<stop offset="0.5210" stop-color="rgb(102,0,0)"/>
<stop offset="0.5240" stop-color="rgb(97,0,0)"/>
<stop offset="0.5269" stop-color="rgb(92,0,0)"/>
<stop offset="0.5299" stop-color="rgb(87,0,0)"/>
<stop offset="0.5329" stop-color="rgb(83,0,0)"/>
<stop offset="0.5359" stop-color="rgb(78,0,0)"/>
<stop offset="0.5389" stop-color="rgb(73,0,0)"/>
<stop offset="0.5419" stop-color="rgb(68,0,0)"/>
<stop offset="0.5449" stop-color="rgb(63,0,0)"/>
<stop offset="0.5479" stop-color="rgb(58,0,0)"/>
<stop offset="0.5509" stop-color="rgb(53,0,0)"/>
<stop offset="0.5539" stop-color="rgb(48,0,0)"/>
<stop offset="0.5569" stop-color="rgb(44,0,0)"/>
<stop offset="0.5599" stop-color="rgb(39,0,0)"/>
<stop offset="0.5629" stop-color="rgb(34,0,0)"/>
<stop offset="0.5659" stop-color="rgb(29,0,0)"/>
<stop offset="0.5689" stop-color="rgb(24,0,0)"/>
<stop offset="0.5719" stop-color="rgb(19,0,0)"/>
<stop offset="0.5749" stop-color="rgb(14,0,0)"/>
<stop offset="0.5778" stop-color="rgb(0,0,0)"/>
<stop offset="0.5808" stop-color="rgb(0,0,0)"/>
<stop offset="0.5838" stop-color="rgb(0,0,0)"/>
<stop offset="0.5868" stop-color="rgb(0,0,0)"/>
<stop offset="0.5898" stop-color="rgb(0,0,0)"/>
<stop offset="0.5928" stop-color="rgb(0,0,0)"/>
<stop offset="0.5958" stop-color="rgb(0,0,0)"/>
<stop offset="0.5988" stop-color="rgb(0,0,0)"/>
<stop offset="0.6018" stop-color="rgb(0,0,0)"/>
<stop offset="0.6048" stop-color="rgb(0,0,0)"/>
<stop offset="0.6078" stop-color="rgb(0,0,0)"/>
<stop offset="0.6108" stop-color="rgb(0,0,0)"/>
<stop offset="0.6138" stop-color="rgb(0,0,0)"/>
<stop offset="0.6168" stop-color="rgb(0,0,0)"/>
<stop offset="0.6198" stop-color="rgb(0,0,0)"/>
<stop offset="0.6228" stop-color="rgb(0,0,0)"/>
<stop offset="0.6257" stop-color="rgb(0,0,0)"/>
<stop offset="0.6287" stop-color="rgb(0,0,0)"/>
<stop offset="0.6317" stop-color="rgb(0,0,0)"/>
<stop offset="0.6347" stop-color="rgb(0,0,0)"/>
<stop offset="0.6377" stop-color="rgb(0,0,0)"/>
<stop offset="0.6407" stop-color="rgb(0,0,0)"/>
<stop offset="0.6437" stop-color="rgb(0,0,0)"/>
<stop offset="0.6467" stop-color="rgb(0,0,0)"/>
<stop offset="0.6497" stop-color="rgb(0,0,0)"/>
<stop offset="0.6527" stop-color="rgb(0,0,0)"/>
<stop offset="0.6557" stop-color="rgb(0,0,0)"/>
<stop offset="0.6587" stop-color="rgb(0,0,0)"/>
<stop offset="0.6617" stop-color="rgb(0,0,0)"/>
<stop offset="0.6647" stop-color="rgb(0,0,0)"/>
<stop offset="0.6677" stop-color="rgb(0,0,0)"/>
<stop offset="0.6707" stop-color="rgb(0,0,0)"/>
<stop offset="0.6737" stop-color="rgb(0,0,0)"/>
<stop offset="0.6766" stop-color="rgb(0,0,0)"/>
<stop offset="0.6796" stop-color="rgb(0,0,0)"/>
<stop offset="0.6826" stop-color="rgb(0,0,0)"/>
<stop offset="0.6856" stop-color="rgb(0,0,0)"/>
<stop offset="0.6886" stop-color="rgb(0,0,0)"/>
<stop offset="0.6916" stop-color="rgb(0,0,0)"/>
<stop offset="0.6946" stop-color="rgb(0,0,0)"/>
<stop offset="0.6976" stop-color="rgb(0,0,0)"/>
<stop offset="0.7006" stop-color="rgb(0,0,0)"/>
<stop offset="0.7036" stop-color="rgb(0,0,0)"/>
<stop offset="0.7066" stop-color="rgb(0,0,0)"/>
<stop offset="0.7096" stop-color="rgb(0,0,0)"/>
<stop offset="0.7126" stop-color="rgb(0,0,0)"/>
<stop offset="0.7156" stop-color="rgb(0,0,0)"/>
<stop offset="0.7186" stop-color="rgb(0,0,0)"/>
<stop offset="0.7216" stop-color="rgb(0,0,0)"/>
<stop offset="0.7246" stop-color="rgb(0,0,0)"/>
<stop offset="0.7275" stop-color="rgb(0,0,0)"/>
<stop offset="0.7305" stop-color="rgb(0,0,0)"/>
<stop offset="0.7335" stop-color="rgb(0,0,0)"/>
<stop offset="0.7365" stop-color="rgb(0,0,0)"/>
<stop offset="0.7395" stop-color="rgb(0,0,0)"/>
<stop offset="0.7425" stop-color="rgb(0,0,0)"/>
<stop offset="0.7455" stop-color="rgb(0,0,0)"/>
<stop offset="0.7485" stop-color="rgb(0,0,0)"/>
<stop offset="0.7515" stop-color="rgb(0,0,0)"/>
<stop offset="0.7545" stop-color="rgb(0,0,0)"/>
<stop offset="0.7575" stop-color="rgb(0,0,0)"/>
<stop offset="0.7605" stop-color="rgb(0,0,0)"/>
<stop offset="0.7635" stop-color="rgb(0,0,0)"/>
<stop offset="0.7665" stop-color="rgb(0,0,0)"/>
<stop offset="0.7695" stop-color="rgb(0,0,0)"/>
<stop offset="0.7725" stop-color="rgb(0,0,0)"/>
<stop offset="0.7754" stop-color="rgb(0,0,0)"/>
<stop offset="0.7784" stop-color="rgb(0,0,0)"/>
<stop offset="0.7814" stop-color="rgb(0,0,0)"/>
<stop offset="0.7844" stop-color="rgb(0,0,0)"/>
<stop offset="0.7874" stop-color="rgb(0,0,0)"/>
<stop offset="0.7904" stop-color="rgb(0,0,0)"/>
<stop offset="0.7934" stop-color="rgb(0,0,0)"/>
<stop offset="0.7964" stop-color="rgb(0,0,0)"/>
<stop offset="0.7994" stop-color="rgb(0,0,0)"/>
<stop offset="0.8024" stop-color="rgb(0,0,0)"/>
<stop offset="0.8054" stop-color="rgb(0,0,0)"/>
<stop offset="0.8084" stop-color="rgb(0,0,0)"/>
<stop offset="0.8114" stop-color="rgb(0,0,0)"/>
<stop offset="0.8144" stop-color="rgb(0,0,0)"/>
<stop offset="0.8174" stop-color="rgb(0,0,0)"/>
<stop offset="0.8204" stop-color="rgb(0,0,0)"/>
<stop offset="0.8234" stop-color="rgb(0,0,0)"/>
<stop offset="0.8263" stop-color="rgb(0,0,0)"/>
<stop offset="0.8293" stop-color="rgb(0,0,0)"/>
<stop offset="0.8323" stop-color="rgb(0,0,0)"/>
<stop offset="0.8353" stop-color="rgb(0,0,0)"/>
<stop offset="0.8383" stop-color="rgb(0,0,0)"/>
<stop offset="0.8413" stop-color="rgb(0,0,0)"/>
<stop offset="0.8443" stop-color="rgb(0,0,0)"/>
<stop offset="0.8473" stop-color="rgb(0,0,0)"/>
<stop offset="0.8503" stop-color="rgb(0,0,0)"/>
<stop offset="0.8533" stop-color="rgb(0,0,0)"/>
<stop offset="0.8563" stop-color="rgb(0,0,0)"/>
<stop offset="0.8593" stop-color="rgb(0,0,0)"/>
<stop offset="0.8623" stop-color="rgb(0,0,0)"/>
<stop offset="0.8653" stop-color="rgb(0,0,0)"/>
<stop offset="0.8683" stop-color="rgb(0,0,0)"/>
<stop offset="0.8713" stop-color="rgb(0,0,0)"/>
<stop offset="0.8743" stop-color="rgb(0,0,0)"/>
<stop offset="0.8772" stop-color="rgb(0,0,0)"/>
<stop offset="0.8802" stop-color="rgb(0,0,0)"/>
<stop offset="0.8832" stop-color="rgb(0,0,0)"/>
<stop offset="0.8862" stop-color="rgb(0,0,0)"/>
<stop offset="0.8892" stop-color="rgb(0,0,0)"/>
<stop offset="0.8922" stop-color="rgb(0,0,0)"/>
<stop offset="0.8952" stop-color="rgb(0,0,0)"/>
<stop offset="0.8982" stop-color="rgb(0,0,0)"/>
<stop offset="0.9012" stop-color="rgb(0,0,0)"/>
<stop offset="0.9042" stop-color="rgb(0,0,0)"/>
<stop offset="0.9072" stop-color="rgb(0,0,0)"/>
<stop offset="0.9102" stop-color="rgb(0,0,0)"/>
<stop offset="0.9132" stop-color="rgb(0,0,0)"/>
<stop offset="0.9162" stop-color="rgb(0,0,0)"/>
<stop offset="0.9192" stop-color="rgb(0,0,0)"/>
<stop offset="0.9222" stop-color="rgb(0,0,0)"/>
<stop offset="0.9251" stop-color="rgb(0,0,0)"/>
<stop offset="0.9281" stop-color="rgb(0,0,0)"/>
<stop offset="0.9311" stop-color="rgb(0,0,0)"/>
<stop offset="0.9341" stop-color="rgb(0,0,0)"/>
<stop offset="0.9371" stop-color="rgb(0,0,0)"/>
<stop offset="0.9401" stop-color="rgb(0,0,0)"/>
<stop offset="0.9431" stop-color="rgb(0,0,0)"/>
<stop offset="0.9461" stop-color="rgb(0,0,0)"/>
<stop offset="0.9491" stop-color="rgb(0,0,0)"/>
<stop offset="0.9521" stop-color="rgb(0,0,0)"/>
<stop offset="0.9551" stop-color="rgb(0,0,0)"/>
<stop offset="0.9581" stop-color="rgb(0,0,0)"/>
<stop offset="0.9611" stop-color="rgb(0,0,0)"/>
<stop offset="0.9641" stop-color="rgb(0,0,0)"/>
<stop offset="0.9671" stop-color="rgb(0,0,0)"/>
<stop offset="0.9701" stop-color="rgb(0,0,0)"/>
<stop offset="0.9731" stop-color="rgb(0,0,0)"/>
<stop offset="0.9760" stop-color="rgb(0,0,0)"/>
<stop offset="0.9790" stop-color="rgb(0,0,0)"/>
<stop offset="0.9820" stop-color="rgb(0,0,0)"/>
<stop offset="0.9850" stop-color="rgb(0,0,0)"/>
<stop offset="0.9880" stop-color="rgb(0,0,0)"/>
<stop offset="0.9910" stop-color="rgb(0,0,0)"/>
<stop offset="0.9940" stop-color="rgb(0,0,0)"/>
<stop offset="0.9970" stop-color="rgb(0,0,0)"/>
<stop offset="1.0000" stop-color="rgb(0,0,0)"/>
</linearGradient></defs>
<line x1="15" x2="1350" y1="416.5" y2="416.5" stroke="#c9ced3" stroke-width="1"/>
<line x1="15" x2="1350" y1="431.5" y2="431.5" stroke="#c9ced3" stroke-width="1"/>
<line x1="15" x2="1350" y1="446.5" y2="446.5" stroke="#c9ced3" stroke-width="1"/>
<line x1="15" x2="1350" y1="462.5" y2="462.5" stroke="#c9ced3" stroke-width="1"/>
<line x1="15" x2="1350" y1="477.5" y2="477.5" stroke="#c9ced3" stroke-width="1"/>
<line x1="15" x2="1350" y1="492.5" y2="492.5" stroke="#c9ced3" stroke-width="1"/>
<line x1="15" x2="1350" y1="507.5" y2="507.5" stroke="#c9ced3" stroke-width="1"/>
<line x1="15" x2="1350" y1="523.5" y2="523.5" stroke="#c9ced3" stroke-width="1"/>
<line x1="15" x2="1350" y1="538.5" y2="538.5" stroke="#c9ced3" stroke-width="1"/>
<line x1="15" x2="1350" y1="553.5" y2="553.5" stroke="#a9cf6f" stroke-width="1"/>
<line x1="15" x2="1350" y1="569.5" y2="569.5" stroke="#c9ced3" stroke-width="1"/>
<line x1="15" x2="1350" y1="584.5" y2="584.5" stroke="#c9ced3" stroke-width="1"/>
<line x1="15" x2="1350" y1="599.5" y2="599.5" stroke="#c9ced3" stroke-width="1"/>
<line x1="15" x2="1350" y1="614.5" y2="614.5" stroke="#c9ced3" stroke-width="1"/>
<line x1="15" x2="1350" y1="630.5" y2="630.5" stroke="#c9ced3" stroke-width="1"/>
<line x1="15" x2="1350" y1="645.5" y2="645.5" stroke="#c9ced3" stroke-width="1"/>
<line x1="15" x2="1350" y1="660.5" y2="660.5" stroke="#c9ced3" stroke-width="1"/>
<line x1="15" x2="1350" y1="675.5" y2="675.5" stroke="#c9ced3" stroke-width="1"/>
<line x1="15" x2="1350" y1="691.5" y2="691.5" stroke="#c9ced3" stroke-width="1"/>
<line x1="31.5" x2="31.5" y1="402" y2="707" stroke="#d6dbe0" stroke-width="1"/>
<line x1="47.5" x2="47.5" y1="402" y2="707" stroke="#d6dbe0" stroke-width="1"/>
<line x1="64.5" x2="64.5" y1="402" y2="707" stroke="#c2c8ce" stroke-width="1"/>
<line x1="81.5" x2="81.5" y1="402" y2="707" stroke="#d6dbe0" stroke-width="1"/>
<line x1="98.5" x2="98.5" y1="402" y2="707" stroke="#d6dbe0" stroke-width="1"/>
<line x1="114.5" x2="114.5" y1="402" y2="707" stroke="#d6dbe0" stroke-width="1"/>
<line x1="131.5" x2="131.5" y1="402" y2="707" stroke="#d6dbe0" stroke-width="1"/>
<line x1="148.5" x2="148.5" y1="402" y2="707" stroke="#878c92" stroke-width="1"/>
<line x1="165.5" x2="165.5" y1="402" y2="707" stroke="#d6dbe0" stroke-width="1"/>
<line x1="181.5" x2="181.5" y1="402" y2="707" stroke="#d6dbe0" stroke-width="1"/>
<line x1="198.5" x2="198.5" y1="402" y2="707" stroke="#d6dbe0" stroke-width="1"/>
<line x1="215.5" x2="215.5" y1="402" y2="707" stroke="#d6dbe0" stroke-width="1"/>
<line x1="232.5" x2="232.5" y1="402" y2="707" stroke="#c2c8ce" stroke-width="1"/>
<line x1="249.5" x2="249.5" y1="402" y2="707" stroke="#d6dbe0" stroke-width="1"/>
<line x1="265.5" x2="265.5" y1="402" y2="707" stroke="#d6dbe0" stroke-width="1"/>
<line x1="282.5" x2="282.5" y1="402" y2="707" stroke="#d6dbe0" stroke-width="1"/>
<line x1="299.5" x2="299.5" y1="402" y2="707" stroke="#d6dbe0" stroke-width="1"/>
<line x1="316.5" x2="316.5" y1="402" y2="707" stroke="#878c92" stroke-width="1"/>
<line x1="332.5" x2="332.5" y1="402" y2="707" stroke="#d6dbe0" stroke-width="1"/>
<line x1="349.5" x2="349.5" y1="402" y2="707" stroke="#d6dbe0" stroke-width="1"/>
<line x1="366.5" x2="366.5" y1="402" y2="707" stroke="#d6dbe0" stroke-width="1"/>
<line x1="383.5" x2="383.5" y1="402" y2="707" stroke="#d6dbe0" stroke-width="1"/>
<line x1="399.5" x2="399.5" y1="402" y2="707" stroke="#c2c8ce" stroke-width="1"/>
<line x1="416.5" x2="416.5" y1="402" y2="707" stroke="#d6dbe0" stroke-width="1"/>
<line x1="433.5" x2="433.5" y1="402" y2="707" stroke="#d6dbe0" stroke-width="1"/>
<line x1="450.5" x2="450.5" y1="402" y2="707" stroke="#d6dbe0" stroke-width="1"/>
<line x1="466.5" x2="466.5" y1="402" y2="707" stroke="#d6dbe0" stroke-width="1"/>
<line x1="483.5" x2="483.5" y1="402" y2="707" stroke="#878c92" stroke-width="1"/>
<line x1="500.5" x2="500.5" y1="402" y2="707" stroke="#d6dbe0" stroke-width="1"/>
<line x1="517.5" x2="517.5" y1="402" y2="707" stroke="#d6dbe0" stroke-width="1"/>
<line x1="533.5" x2="533.5" y1="402" y2="707" stroke="#d6dbe0" stroke-width="1"/>
<line x1="550.5" x2="550.5" y1="402" y2="707" stroke="#d6dbe0" stroke-width="1"/>
<line x1="567.5" x2="567.5" y1="402" y2="707" stroke="#c2c8ce" stroke-width="1"/>
<line x1="584.5" x2="584.5" y1="402" y2="707" stroke="#d6dbe0" stroke-width="1"/>
<line x1="601.5" x2="601.5" y1="402" y2="707" stroke="#d6dbe0" stroke-width="1"/>
<line x1="617.5" x2="617.5" y1="402" y2="707" stroke="#d6dbe0" stroke-width="1"/>
<line x1="634.5" x2="634.5" y1="402" y2="707" stroke="#d6dbe0" stroke-width="1"/>
<line x1="651.5" x2="651.5" y1="402" y2="707" stroke="#878c92" stroke-width="1"/>
<line x1="668.5" x2="668.5" y1="402" y2="707" stroke="#d6dbe0" stroke-width="1"/>
<line x1="684.5" x2="684.5" y1="402" y2="707" stroke="#d6dbe0" stroke-width="1"/>
<line x1="701.5" x2="701.5" y1="402" y2="707" stroke="#d6dbe0" stroke-width="1"/>
<line x1="718.5" x2="718.5" y1="402" y2="707" stroke="#d6dbe0" stroke-width="1"/>
<line x1="735.5" x2="735.5" y1="402" y2="707" stroke="#c2c8ce" stroke-width="1"/>
<line x1="751.5" x2="751.5" y1="402" y2="707" stroke="#d6dbe0" stroke-width="1"/>
<line x1="768.5" x2="768.5" y1="402" y2="707" stroke="#d6dbe0" stroke-width="1"/>
<line x1="785.5" x2="785.5" y1="402" y2="707" stroke="#d6dbe0" stroke-width="1"/>
<line x1="802.5" x2="802.5" y1="402" y2="707" stroke="#d6dbe0" stroke-width="1"/>
<line x1="818.5" x2="818.5" y1="402" y2="707" stroke="#878c92" stroke-width="1"/>
<line x1="835.5" x2="835.5" y1="402" y2="707" stroke="#d6dbe0" stroke-width="1"/>
<line x1="852.5" x2="852.5" y1="402" y2="707" stroke="#d6dbe0" stroke-width="1"/>
<line x1="869.5" x2="869.5" y1="402" y2="707" stroke="#d6dbe0" stroke-width="1"/>
<line x1="886.5" x2="886.5" y1="402" y2="707" stroke="#d6dbe0" stroke-width="1"/>
<line x1="902.5" x2="902.5" y1="402" y2="707" stroke="#c2c8ce" stroke-width="1"/>
<line x1="919.5" x2="919.5" y1="402" y2="707" stroke="#d6dbe0" stroke-width="1"/>
<line x1="936.5" x2="936.5" y1="402" y2="707" stroke="#d6dbe0" stroke-width="1"/>
<line x1="953.5" x2="953.5" y1="402" y2="707" stroke="#d6dbe0" stroke-width="1"/>
<line x1="969.5" x2="969.5" y1="402" y2="707" stroke="#d6dbe0" stroke-width="1"/>
<line x1="986.5" x2="986.5" y1="402" y2="707" stroke="#878c92" stroke-width="1"/>
<line x1="1003.5" x2="1003.5" y1="402" y2="707" stroke="#d6dbe0" stroke-width="1"/>
<line x1="1020.5" x2="1020.5" y1="402" y2="707" stroke="#d6dbe0" stroke-width="1"/>
<line x1="1036.5" x2="1036.5" y1="402" y2="707" stroke="#d6dbe0" stroke-width="1"/>
<line x1="1053.5" x2="1053.5" y1="402" y2="707" stroke="#d6dbe0" stroke-width="1"/>
<line x1="1070.5" x2="1070.5" y1="402" y2="707" stroke="#c2c8ce" stroke-width="1"/>
<line x1="1087.5" x2="1087.5" y1="402" y2="707" stroke="#d6dbe0" stroke-width="1"/>
<line x1="1103.5" x2="1103.5" y1="402" y2="707" stroke="#d6dbe0" stroke-width="1"/>
<line x1="1120.5" x2="1120.5" y1="402" y2="707" stroke="#d6dbe0" stroke-width="1"/>
<line x1="1137.5" x2="1137.5" y1="402" y2="707" stroke="#d6dbe0" stroke-width="1"/>
<line x1="1154.5" x2="1154.5" y1="402" y2="707" stroke="#878c92" stroke-width="1"/>
<line x1="1171.5" x2="1171.5" y1="402" y2="707" stroke="#d6dbe0" stroke-width="1"/>
<line x1="1187.5" x2="1187.5" y1="402" y2="707" stroke="#d6dbe0" stroke-width="1"/>
<line x1="1204.5" x2="1204.5" y1="402" y2="707" stroke="#d6dbe0" stroke-width="1"/>
<line x1="1221.5" x2="1221.5" y1="402" y2="707" stroke="#d6dbe0" stroke-width="1"/>
<line x1="1238.5" x2="1238.5" y1="402" y2="707" stroke="#c2c8ce" stroke-width="1"/>
<line x1="1254.5" x2="1254.5" y1="402" y2="707" stroke="#d6dbe0" stroke-width="1"/>
<line x1="1271.5" x2="1271.5" y1="402" y2="707" stroke="#d6dbe0" stroke-width="1"/>
<line x1="1288.5" x2="1288.5" y1="402" y2="707" stroke="#d6dbe0" stroke-width="1"/>
<line x1="1305.5" x2="1305.5" y1="402" y2="707" stroke="#d6dbe0" stroke-width="1"/>
<line x1="1321.5" x2="1321.5" y1="402" y2="707" stroke="#878c92" stroke-width="1"/>
<line x1="1338.5" x2="1338.5" y1="402" y2="707" stroke="#d6dbe0" stroke-width="1"/>
<line x1="15" x2="1350" y1="401.5" y2="401.5" stroke="#a9cf6f" stroke-width="1.2"/>
<path d="M14,707 L14.0,689.7 L30.0,689.5 L37.0,688.2 L42.0,689.2 L50.0,688.8 L70.0,688.0 L90.0,687.3 L110.0,685.8 L125.0,683.5 L132.9,681.3 L136.0,678.0 L139.8,672.3 L142.6,662.9 L145.4,644.0 L149.2,615.9 L153.3,587.6 L155.8,568.8 L158.2,556.6 L159.5,556.6 L160.8,568.8 L162.3,587.6 L164.2,615.9 L166.1,644.0 L167.0,662.9 L168.9,672.3 L173.6,677.0 L180.0,678.5 L186.0,678.0 L190.0,674.4 L194.4,670.0 L196.6,665.5 L199.2,653.7 L201.1,633.0 L203.3,600.6 L204.8,574.0 L205.5,543.0 L206.0,518.0 L206.9,502.0 L207.2,485.0 L208.3,477.5 L209.5,477.5 L210.0,485.0 L210.7,502.0 L210.7,518.0 L211.7,543.0 L211.8,574.0 L212.9,600.6 L213.6,633.0 L213.9,653.7 L214.4,665.5 L215.1,668.0 L216.2,664.0 L217.0,666.0 L218.0,669.0 L224.0,674.0 L228.9,677.0 L235.0,678.5 L242.6,678.3 L247.1,676.7 L254.0,678.3 L258.5,675.6 L266.9,673.6 L275.4,669.4 L279.6,663.7 L283.9,641.2 L286.7,612.9 L289.5,573.4 L292.3,542.3 L295.2,527.4 L300.8,535.3 L306.5,550.8 L312.1,573.4 L317.8,598.8 L322.0,624.2 L326.2,644.0 L331.9,656.7 L340.3,663.7 L351.6,667.1 L357.3,663.7 L362.9,653.9 L368.6,641.2 L370.8,614.5 L372.9,582.3 L376.1,575.8 L378.3,550.0 L379.4,534.8 L381.5,491.8 L383.7,455.2 L385.8,430.5 L388.0,420.8 L393.3,407.9 L397.6,423.0 L399.8,446.6 L403.0,481.0 L406.2,515.4 L409.5,555.0 L413.8,582.3 L418.1,610.2 L424.5,627.4 L431.0,632.8 L435.3,636.0 L439.6,640.3 L441.7,614.5 L442.8,582.3 L444.3,555.0 L445.4,511.0 L446.5,481.0 L448.6,441.2 L450.8,463.8 L452.5,478.9 L454.6,471.3 L457.2,470.3 L459.4,469.2 L460.4,463.8 L462.6,441.2 L464.1,463.8 L466.9,485.3 L468.6,490.7 L471.8,455.2 L474.4,470.3 L477.6,509.0 L479.1,516.5 L483.0,492.8 L486.2,515.4 L489.5,543.4 L491.2,545.5 L494.8,524.0 L497.6,459.5 L499.8,416.5 L501.9,401.5 L504.5,412.2 L507.7,431.6 L510.9,470.3 L514.2,515.4 L516.3,533.7 L519.6,536.9 L526.0,535.9 L530.3,536.9 L534.2,516.5 L536.8,545.5 L537.8,555.0 L538.3,571.5 L539.8,599.5 L543.0,621.0 L547.3,640.3 L552.7,651.0 L558.0,657.5 L562.4,664.0 L566.7,660.8 L569.9,668.3 L573.1,678.0 L579.6,684.4 L585.0,687.2 L594.6,689.8 L607.5,691.5 L620.0,692.4 L625.0,692.2 L628.0,691.9 L631.0,692.7 L634.0,691.8 L637.0,692.6 L640.0,692.4 L643.0,691.9 L646.0,692.7 L649.0,691.9 L652.0,692.6 L655.0,692.0 L658.0,692.1 L661.0,692.7 L664.0,693.3 L667.0,692.2 L670.0,692.4 L673.0,693.1 L676.0,693.6 L679.0,693.1 L682.0,692.8 L685.0,693.8 L688.0,692.3 L691.0,693.6 L694.0,692.8 L697.0,692.6 L700.0,692.5 L703.0,692.9 L706.0,693.7 L709.0,692.7 L712.0,693.4 L715.0,693.5 L718.0,693.1 L721.0,693.4 L724.0,692.7 L727.0,692.7 L730.0,693.0 L733.0,693.8 L736.0,693.4 L739.0,693.2 L742.0,693.7 L745.0,693.5 L748.0,693.3 L751.0,694.1 L754.0,694.0 L757.0,693.3 L760.0,693.8 L763.0,693.8 L766.0,694.4 L769.0,694.2 L772.0,693.5 L775.0,694.6 L778.0,693.3 L781.0,693.8 L784.0,694.4 L787.0,693.4 L790.0,694.0 L793.0,693.3 L796.0,694.3 L799.0,694.5 L802.0,694.2 L805.0,694.8 L808.0,693.9 L811.0,694.5 L814.0,694.4 L817.0,694.4 L820.0,694.2 L823.0,694.8 L826.0,695.0 L829.0,694.3 L832.0,694.6 L835.0,693.6 L838.0,694.6 L841.0,694.5 L844.0,695.1 L847.0,694.8 L850.0,694.0 L853.0,694.1 L856.0,694.6 L859.0,693.5 L862.0,694.2 L865.0,693.8 L868.0,693.7 L871.0,693.6 L874.0,694.7 L877.0,693.7 L880.0,693.9 L883.0,694.1 L886.0,694.9 L889.0,693.6 L892.0,694.2 L895.0,694.4 L898.0,694.9 L901.0,694.8 L904.0,694.9 L907.0,693.9 L910.0,694.2 L913.0,694.1 L914.3,693.5 L918.3,693.0 L918.8,689.0 L920.1,689.0 L920.5,695.0 L924.3,693.5 L925.0,693.8 L928.0,693.9 L931.0,693.9 L934.0,694.3 L937.0,694.4 L940.0,693.9 L943.0,693.5 L946.0,694.2 L949.0,694.1 L952.0,694.4 L955.0,695.0 L958.0,694.6 L961.0,694.3 L964.0,694.5 L967.0,694.6 L970.0,693.6 L973.0,694.9 L976.0,694.7 L979.0,694.9 L982.0,694.8 L985.0,694.1 L988.0,694.1 L991.0,693.7 L994.0,694.5 L997.0,693.6 L1000.0,693.6 L1003.0,693.8 L1006.0,693.8 L1009.0,694.0 L1012.0,693.6 L1015.0,693.5 L1018.0,693.7 L1021.0,693.7 L1024.0,694.1 L1027.0,693.5 L1030.0,694.9 L1033.0,694.5 L1036.0,693.7 L1039.0,693.9 L1042.0,694.1 L1045.0,694.1 L1048.0,693.7 L1051.0,694.9 L1054.0,695.1 L1057.0,694.2 L1060.0,694.3 L1063.0,693.6 L1066.0,693.7 L1069.0,694.0 L1072.0,693.9 L1075.0,694.8 L1078.0,693.8 L1081.0,693.5 L1084.0,695.0 L1087.0,694.3 L1090.0,693.7 L1093.0,694.4 L1096.0,693.5 L1099.0,694.3 L1102.0,695.1 L1105.0,694.9 L1108.0,694.6 L1111.0,693.9 L1114.0,694.1 L1117.0,693.8 L1120.0,694.7 L1123.0,694.4 L1126.0,694.7 L1129.0,694.0 L1132.0,693.9 L1135.0,694.8 L1138.0,695.1 L1141.0,694.9 L1144.0,694.8 L1147.0,694.8 L1150.0,694.7 L1153.0,693.9 L1156.0,694.3 L1159.0,694.1 L1162.0,693.5 L1165.0,693.5 L1168.0,693.9 L1171.0,693.9 L1174.0,694.6 L1177.0,695.0 L1180.0,694.2 L1183.0,695.0 L1186.0,695.1 L1189.0,695.0 L1192.0,694.1 L1195.0,693.9 L1198.0,693.9 L1201.0,693.8 L1204.0,693.8 L1207.0,694.5 L1210.0,694.9 L1213.0,694.8 L1216.0,694.3 L1219.0,694.5 L1222.0,694.8 L1225.0,693.6 L1228.0,694.6 L1231.0,695.0 L1234.0,694.8 L1237.0,694.7 L1240.0,694.3 L1243.0,693.8 L1246.0,690.8 L1249.0,691.5 L1252.0,690.9 L1255.0,691.2 L1258.0,690.6 L1261.0,691.4 L1264.0,694.8 L1266.5,693.5 L1268.0,676.0 L1268.5,672.0 L1269.8,672.0 L1270.2,678.0 L1271.5,693.5 L1273.0,695.1 L1276.0,694.6 L1279.0,694.1 L1282.0,694.4 L1285.0,693.7 L1288.0,693.5 L1291.0,695.1 L1294.0,694.5 L1297.0,694.3 L1300.0,695.0 L1303.0,694.2 L1306.0,694.9 L1309.0,694.8 L1312.0,693.8 L1315.0,693.9 L1318.0,694.0 L1321.0,693.9 L1324.0,694.4 L1327.0,693.9 L1330.0,694.2 L1333.0,693.7 L1336.0,695.0 L1339.0,694.1 L1342.0,694.2 L1345.0,694.4 L1348.0,694.9 L1350.0,694.0 L1350,707 Z" fill="url(#sg)" stroke="#0b2e14" stroke-width="1.1" stroke-linejoin="round"/>
<line x1="37.5" x2="37.5" y1="688.0" y2="707" stroke="#bf1c34" stroke-width="1"/>
<line x1="158.5" x2="158.5" y1="556.0" y2="707" stroke="#bf1c34" stroke-width="1"/>
<line x1="208.5" x2="208.5" y1="477.0" y2="707" stroke="#bf1c34" stroke-width="1"/>
<line x1="295.5" x2="295.5" y1="527.0" y2="707" stroke="#4e7a7e" stroke-width="1"/>
<line x1="393.5" x2="393.5" y1="408.0" y2="707" stroke="#b44a1a" stroke-width="1"/>
<line x1="463.5" x2="463.5" y1="441.0" y2="707" stroke="#bf1c34" stroke-width="1"/>
<line x1="502.5" x2="502.5" y1="401.5" y2="707" stroke="#bf1c34" stroke-width="1"/>
<line x1="533.5" x2="533.5" y1="516.5" y2="707" stroke="#bf1c34" stroke-width="1"/>
<line x1="673.5" x2="673.5" y1="694.0" y2="707" stroke="#bf1c34" stroke-width="1"/>
<line x1="725.5" x2="725.5" y1="694.0" y2="707" stroke="#bf1c34" stroke-width="1"/>
<line x1="745.5" x2="745.5" y1="694.0" y2="707" stroke="#bf1c34" stroke-width="1"/>
<line x1="767.5" x2="767.5" y1="694.0" y2="707" stroke="#bf1c34" stroke-width="1"/>
<line x1="787.5" x2="787.5" y1="694.0" y2="707" stroke="#bf1c34" stroke-width="1"/>
<line x1="829.5" x2="829.5" y1="694.0" y2="707" stroke="#bf1c34" stroke-width="1"/>
<line x1="860.5" x2="860.5" y1="694.0" y2="707" stroke="#bf1c34" stroke-width="1"/>
<line x1="891.5" x2="891.5" y1="694.0" y2="707" stroke="#bf1c34" stroke-width="1"/>
<line x1="919.5" x2="919.5" y1="689.0" y2="707" stroke="#bf1c34" stroke-width="1"/>
<line x1="954.5" x2="954.5" y1="694.0" y2="707" stroke="#bf1c34" stroke-width="1"/>
<line x1="996.5" x2="996.5" y1="694.0" y2="707" stroke="#bf1c34" stroke-width="1"/>
<line x1="1038.5" x2="1038.5" y1="694.0" y2="707" stroke="#bf1c34" stroke-width="1"/>
<line x1="1078.5" x2="1078.5" y1="694.0" y2="707" stroke="#bf1c34" stroke-width="1"/>
<line x1="1120.5" x2="1120.5" y1="694.0" y2="707" stroke="#bf1c34" stroke-width="1"/>
<line x1="1162.5" x2="1162.5" y1="694.0" y2="707" stroke="#bf1c34" stroke-width="1"/>
<line x1="1194.5" x2="1194.5" y1="694.0" y2="707" stroke="#bf1c34" stroke-width="1"/>
<line x1="1226.5" x2="1226.5" y1="694.0" y2="707" stroke="#bf1c34" stroke-width="1"/>
<line x1="1268.5" x2="1268.5" y1="672.0" y2="707" stroke="#bf1c34" stroke-width="1"/>
<line x1="1308.5" x2="1308.5" y1="694.0" y2="707" stroke="#bf1c34" stroke-width="1"/>
<line x1="208.5" x2="208.5" y1="403" y2="477.0" stroke="#000" stroke-width="1" stroke-dasharray="1,1"/>
<line x1="393.5" x2="393.5" y1="403" y2="408.0" stroke="#000" stroke-width="1" stroke-dasharray="1,1"/>
</svg>
<div class="ax" style="left:146px">400</div>
<div class="ax" style="left:314px">500</div>
<div class="ax" style="left:481px">600</div>
<div class="ax" style="left:649px">700</div>
<div class="ax" style="left:816px">800</div>
<div class="ax" style="left:984px">900</div>
<div class="ax" style="left:1152px">1000</div>
<div class="ax" style="left:1319px">1100</div>
<div class="pk" style="left:23.0px;top:670.0px;width:27.0px">334</div>
<div class="pk" style="left:144.5px;top:688.5px;width:26.0px">406</div>
<div class="pk" style="left:194.4px;top:688.5px;width:26.0px">436</div>
<div class="pk" style="left:281.2px;top:688.5px;width:26.5px">488</div>
<div class="pk" style="left:379.2px;top:688.5px;width:26.5px">546</div>
<div class="pk" style="left:448.4px;top:688.5px;width:26.5px">588</div>
<div class="pk" style="left:487.3px;top:688.5px;width:26.5px">611</div>
<div class="pk" style="left:520.3px;top:688.5px;width:26.5px">630</div>
<div class="pk" style="left:658.2px;top:674.5px;width:26.5px">713</div>
<div class="pk" style="left:710.3px;top:675.4px;width:26.5px">744</div>
<div class="pk" style="left:731.3px;top:675.4px;width:26.5px">756</div>
<div class="pk" style="left:752.6px;top:675.4px;width:26.5px">769</div>
<div class="pk" style="left:773.6px;top:675.4px;width:26.5px">781</div>
<div class="pk" style="left:815.3px;top:674.3px;width:26.5px">806</div>
<div class="pk" style="left:846.4px;top:675.4px;width:26.5px">825</div>
<div class="pk" style="left:877.2px;top:675.3px;width:26.5px">843</div>
<div class="pk" style="left:905.2px;top:673.2px;width:26.5px">860</div>
<div class="pk" style="left:940.1px;top:675.3px;width:26.5px">881</div>
<div class="pk" style="left:982.1px;top:675.3px;width:26.5px">906</div>
<div class="pk" style="left:1023.3px;top:676.2px;width:26.5px">931</div>
<div class="pk" style="left:1065.3px;top:675.3px;width:26.5px">955</div>
<div class="pk" style="left:1107.2px;top:675.3px;width:26.5px">980</div>
<div class="pk" style="left:1149.4px;top:675.3px;width:34.4px">1005</div>
<div class="pk" style="left:1180.6px;top:676.3px;width:31.0px">1024</div>
<div class="pk" style="left:1211.6px;top:676.3px;width:34.0px">1043</div>
<div class="pk" style="left:1254.1px;top:688.1px;width:34.4px">1068</div>
<div class="pk" style="left:1295.2px;top:675.3px;width:34.5px">1092</div>
<div class="hpk" style="left:194px;top:386px;width:27px">436</div>
<div class="hpk" style="left:379px;top:386px;width:27px">546</div>
<!-- right orange bar -->
<div class="a" style="left:1355px;top:385px;width:12px;height:323px;background:linear-gradient(90deg,#ffb260,#ff9a30 40%,#f36a08 80%,#ec5a00);border-left:2px solid #7f7f7f;border-top:3px solid #7f7f7f"></div>

<div class="a" style="left:8px;top:709px;width:1348px;height:27px;background:#fffce8"></div>
<div class="lbl" style="left:18px;top:718.5px;font-size:12.6px;color:#111">Max: 611 nm</div>
<div class="btn gb" style="left:921px;top:716px;width:72px">Reference</div>
<div class="btn gb" style="left:999px;top:716px;width:45px">Dips</div>
<div class="btn yb" style="left:1050px;top:716px;width:49px">Peaks</div>
<div class="btn yb" style="left:1105px;top:716px;width:55px">Colors</div>
<div class="lbl" style="left:1192px;top:717px;font-size:11.5px">Filter</div>
<div class="inp" style="left:1222px;top:715px;width:34px;height:15px;line-height:18px;background:#fdf8ea">3</div>
<div class="btn yb" style="left:1275px;top:716px;width:75px">Trim scale</div>

</body></html>
